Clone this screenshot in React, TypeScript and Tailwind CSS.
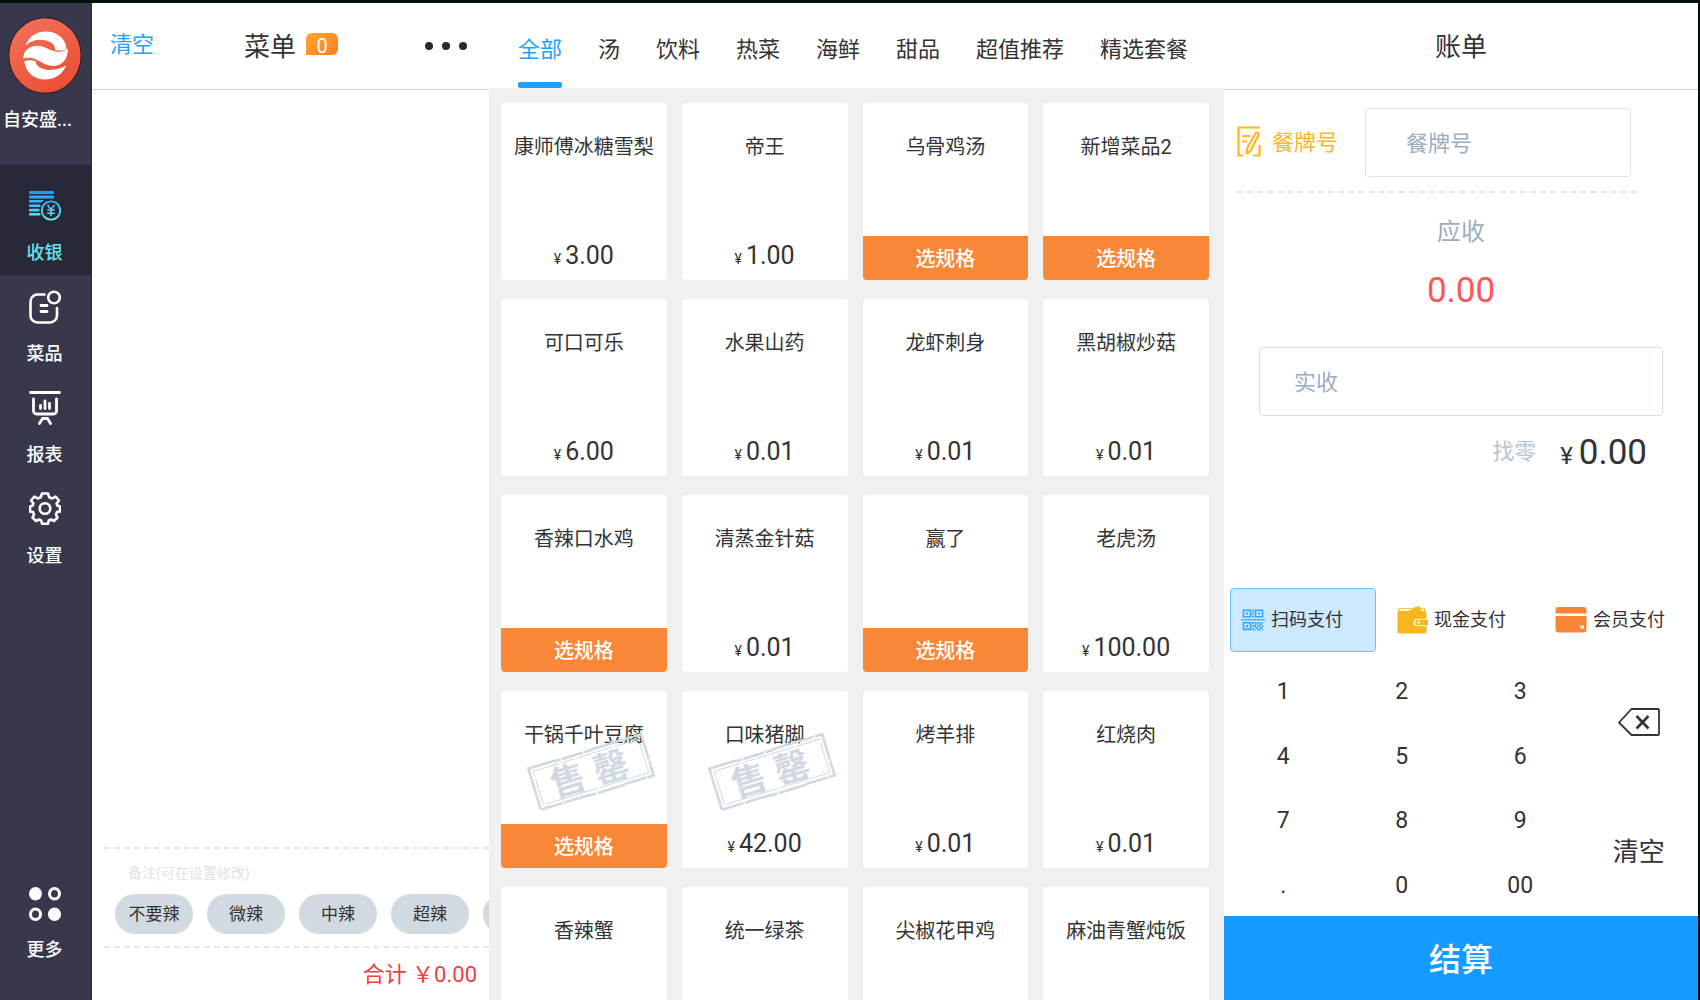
import React, { useState } from "react";

type Dish = { name: string; price?: string; hasOptions?: boolean; soldOut?: boolean };

const dishes: Dish[] = [
  { name: "康师傅冰糖雪梨", price: "3.00" },
  { name: "帝王", price: "1.00" },
  { name: "乌骨鸡汤", hasOptions: true },
  { name: "新增菜品2", hasOptions: true },
  { name: "可口可乐", price: "6.00" },
  { name: "水果山药", price: "0.01" },
  { name: "龙虾刺身", price: "0.01" },
  { name: "黑胡椒炒菇", price: "0.01" },
  { name: "香辣口水鸡", hasOptions: true },
  { name: "清蒸金针菇", price: "0.01" },
  { name: "赢了", hasOptions: true },
  { name: "老虎汤", price: "100.00" },
  { name: "干锅千叶豆腐", hasOptions: true, soldOut: true },
  { name: "口味猪脚", price: "42.00", soldOut: true },
  { name: "烤羊排", price: "0.01" },
  { name: "红烧肉", price: "0.01" },
  { name: "香辣蟹" },
  { name: "统一绿茶" },
  { name: "尖椒花甲鸡" },
  { name: "麻油青蟹炖饭" },
];

const categories = ["全部", "汤", "饮料", "热菜", "海鲜", "甜品", "超值推荐", "精选套餐"];
const remarks = ["不要辣", "微辣", "中辣", "超辣"];
const keys = ["1", "2", "3", "4", "5", "6", "7", "8", "9", ".", "0", "00"];

function Logo() {
  return (
    <svg viewBox="26 52 220 230" className="h-[77px] w-[74px]" aria-hidden="true">
      <defs>
        <linearGradient id="logo" x1="0.2" y1="0" x2="0.8" y2="1">
          <stop offset="0" stopColor="#f2705a" />
          <stop offset="1" stopColor="#e94c33" />
        </linearGradient>
      </defs>
      <ellipse cx="136" cy="167" rx="108" ry="113" fill="url(#logo)" stroke="#2a1c24" strokeWidth="3" />
      <g fill="#fff">
        <path d="M78 137C88 108 113 95 138 95c34 0 62 22 62 54-8 4-20 4-34 2 1-14-8-22-22-27-22-8-48-5-66 13Z" />
        <path d="M71 176c0-20 14-35 37-38 24-2 42 16 66 18 14 1 24-4 30-10 2 28-14 50-39 52-25 1-40-13-58-20-13-5-26-5-36-2Z" />
        <path d="M74 184c11-4 24-3 35 0-2 14 16 25 40 26 20 0 36-5 50-13-10 25-34 42-62 42-34 0-59-23-63-55Z" />
      </g>
    </svg>
  );
}

function CashierIcon() {
  return (
    <svg viewBox="0 0 32 30" className="h-[30px] w-8" fill="none" aria-hidden="true">
      <defs>
        <linearGradient id="cash" gradientUnits="userSpaceOnUse" x1="0" y1="0" x2="0" y2="30">
          <stop offset="0" stopColor="#1c97ff" />
          <stop offset="1" stopColor="#6cefee" />
        </linearGradient>
      </defs>
      <g fill="url(#cash)">
        <rect x="0" y="0" width="25" height="3" rx="0.8" />
        <rect x="0" y="4.6" width="25" height="2.8" rx="0.8" />
        <path d="M1 9h14l-2.500 2.600H1a1 1 0 0 1-1-1V10a1 1 0 0 1 1-1Z" />
        <rect x="0" y="13.400" width="11.500" height="2.600" rx="0.8" />
        <rect x="0" y="17.800" width="10.500" height="2.600" rx="0.8" />
        <rect x="0" y="22" width="11.500" height="2.600" rx="0.8" />
      </g>
      <g stroke="url(#cash)">
        <circle cx="22" cy="19.500" r="9.200" strokeWidth="1.800" />
        <path d="m18.500 14 3.500 4.500 3.500-4.500M22 18.500V25M18.300 19h7.400M18.300 22.200h7.400" strokeWidth="1.600" />
      </g>
    </svg>
  );
}

function DishIcon() {
  return (
    <svg viewBox="0 0 32 34" className="h-[34px] w-8" fill="none" stroke="#fff" strokeWidth="2.600" strokeLinecap="round" aria-hidden="true">
      <path d="M15.500 4.500H8.500a7 7 0 0 0-7 7V25.500a7 7 0 0 0 7 7h12.500a7 7 0 0 0 7-7V18" />
      <circle cx="25" cy="7.500" r="5.800" />
      <path d="M12 15.500h6M12 21.500h6" strokeWidth="2.800" />
    </svg>
  );
}

function ReportIcon() {
  return (
    <svg viewBox="0 0 32 34" className="h-[34px] w-8" fill="none" stroke="#fff" strokeWidth="2.800" strokeLinecap="round" strokeLinejoin="round" aria-hidden="true">
      <path d="M1.500 1.500h29M4.500 8v12a3 3 0 0 0 3 3h17a3 3 0 0 0 3-3V8" />
      <path d="M11.500 14.500V17.500M16 10v7.500M20.500 12.500v5" />
      <path d="m10.500 32.500 3-5h5l3 5" />
    </svg>
  );
}

function GearIcon() {
  return (
    <svg viewBox="-16 -16.500 32 33" className="h-[33px] w-8" fill="none" stroke="#fff" strokeWidth="2.600" strokeLinejoin="round" aria-hidden="true">
      <path d="M-3-15H3L4.200-11.300 7.300-10 10.600-12 14-8 11.600-5.200 12.200-3 15-2V3L12 3.500 11 6 12.500 9 9 12.500 6 11 3.800 12 3 15.200H-3L-3.800 12-6 11-9 12.500-12.500 9-11 6-12 3.500-15 3V-2L-12.200-3-11.600-5.200-14-8-10.600-12-7.300-10-4.200-11.300Z" />
      <circle r="5.300" />
    </svg>
  );
}

function MoreIcon() {
  return (
    <svg viewBox="0 0 32 34" className="h-[34px] w-8" aria-hidden="true">
      <ellipse cx="6.500" cy="6.800" rx="6.500" ry="6.800" fill="#fff" />
      <ellipse cx="25.500" cy="27.200" rx="6.500" ry="6.800" fill="#fff" />
      <g fill="none" stroke="#fff" strokeWidth="3">
        <ellipse cx="25.500" cy="6.800" rx="5" ry="5.300" />
        <ellipse cx="6.500" cy="27.200" rx="5" ry="5.300" />
      </g>
    </svg>
  );
}

function NoteIcon() {
  return (
    <svg viewBox="0 0 24 31" className="mb-0.5 h-[31px] w-6" fill="none" stroke="#ffb71b" strokeWidth="2.200" aria-hidden="true">
      <path d="M23 1.500H1.500V29.500h5M22.500 19v10.500H16M5 10h8.500M5 15.500h5" />
      <path d="M18.500 7.200a1.800 1.800 0 0 1 3 1.800L13.500 25l-3.800 2.500.3-5Z" strokeLinejoin="round" />
    </svg>
  );
}

function QrIcon() {
  return (
    <svg viewBox="0 0 24 22" className="h-[22px] w-6 shrink-0" fill="none" stroke="#2fa5fc" strokeWidth="1.600" aria-hidden="true">
      <path d="M2.500 1.200h7v6.600h-7ZM14.500 1.200h7v6.600h-7ZM2.500 13.800h7v6.600h-7Z" />
      <path d="M4.900 4.500h2.200M16.900 4.500h2.200M4.900 17.100h2.200" strokeWidth="2.200" />
      <path d="M0 10.800h24" strokeWidth="1.200" />
      <path d="M12 .5v9M12 13v8.500" strokeDasharray="2 1" />
      <path d="m13.500 13 8.500 8.500M17.500 13l4.500 4.500M13.500 17l4.500 4.500M22 13l-8.500 8.500M17.500 13l-4 4M22 17.500l-4 4" strokeDasharray="2.600 .9" strokeWidth="1.200" />
    </svg>
  );
}

function WalletIcon() {
  return (
    <svg viewBox="0 0 31 28" className="h-7 w-[31px] shrink-0" aria-hidden="true">
      <path d="M3 2h12L22 .3l2 1.700h3a1 1 0 0 1 1 1v3H1V4a2 2 0 0 1 2-2Z" fill="#f7b51f" />
      <path d="M3.500 2.800h13L11 5H3a1.100 1.100 0 0 1 .5-2.200ZM24.500 2.500l2.500.3v2.200h-3Z" fill="#fff" />
      <path d="M1 5.300h27a1.500 1.500 0 0 1 1.500 1.500V13H20a3.500 3.500 0 0 0 0 7h9.500v5a2.500 2.500 0 0 1-2.500 2.500H3A2.500 2.500 0 0 1 .5 25V5Z" fill="#f7b51f" />
      <path d="M21 13.700h10v5.600H21a2.800 2.800 0 0 1 0-5.600Z" fill="#f7b51f" />
      <path d="M30 13.300h-9.500a3.200 3.200 0 0 0 0 6.400H29" fill="none" stroke="#fff3d0" />
      <circle cx="21.500" cy="16.500" r="1.200" fill="#fff" />
    </svg>
  );
}

function CardIcon() {
  return (
    <svg viewBox="0 0 32 26" className="h-[26px] w-8 shrink-0" fill="#f78536" aria-hidden="true">
      <path d="M3.500 0h25A3 3 0 0 1 31.500 3v3.500H.5V3a3 3 0 0 1 3-3Z" />
      <path d="M.5 9h31v13.500a3 3 0 0 1-3 3h-25a3 3 0 0 1-3-3Z" />
      <rect x="25.500" y="18.500" width="3.500" height="3" fill="#fff" />
    </svg>
  );
}

function BackspaceIcon() {
  return (
    <svg viewBox="0 0 42 28" className="mb-0.5 h-7 w-[42px]" fill="none" stroke="#333" strokeWidth="1.800" strokeLinejoin="round" aria-hidden="true">
      <path d="M13.500 1H40a1 1 0 0 1 1 1v24a1 1 0 0 1-1 1H13.500L1 14.500Z" />
      <path d="m18.500 8 12 12.500M30.500 8l-12 12.500" strokeWidth="2.600" />
    </svg>
  );
}

function SoldOutStamp() {
  return (
    <div className="pointer-events-none absolute inset-x-0 top-[38px] flex justify-center">
      <svg viewBox="0 0 136 86" className="ml-3.5 h-[86px] w-[136px] shrink-0" role="img" aria-label="售罄">
        <g transform="rotate(-17 68 43)" fill="none" stroke="#d0d9e1">
          <path d="M9 21.500h27l1 .6h38l1-.6h51V64.500H97l-1 .6H60l-1-.6H9Z" strokeWidth="2.600" strokeDasharray="34 1.200 22 1 51 1.600" />
          <path d="M13 25.500h110V60.500H13Z" strokeWidth="1" strokeDasharray="27 2 14 1 39 2" />
          <text x="26" y="57" fontSize="35" fontWeight="700" fill="#d0d9e1" stroke="none">售</text>
          <text x="71" y="57" fontSize="35" fontWeight="700" fill="#d0d9e1" stroke="none">罄</text>
        </g>
      </svg>
    </div>
  );
}

function DishCard({ dish }: { dish: Dish }) {
  return (
    <article className="relative flex h-[177px] flex-col items-center justify-between overflow-hidden rounded bg-white text-[#333]">
      <h3 className="pt-[30px] text-xl leading-7">{dish.name}</h3>
      {dish.price && (
        <p className="pb-2 text-[25px] leading-8">
          <span className="mr-1 text-sm">¥</span>
          {dish.price}
        </p>
      )}
      {dish.hasOptions && (
        <button className="h-11 w-full bg-[#f88737] pt-0.5 text-xl font-medium text-white">选规格</button>
      )}
      {dish.soldOut && <SoldOutStamp />}
    </article>
  );
}

function Sidebar() {
  const items = [
    { label: "菜品", icon: <DishIcon /> },
    { label: "报表", icon: <ReportIcon /> },
    { label: "设置", icon: <GearIcon /> },
  ];
  return (
    <aside className="flex w-[92px] shrink-0 flex-col border-r border-[#29293a] bg-[#37384c] text-lg font-medium text-white">
      <div className="flex h-[162px] shrink-0 flex-col items-center pt-3.5 pr-0.5">
        <Logo />
        <p className="mt-3.5 w-full pl-[3px] leading-6">自安盛...</p>
      </div>
      <nav className="flex flex-1 flex-col">
        <button className="flex h-[110px] flex-col items-center justify-between bg-[#282938] pt-[26px] pr-0.5 pb-2 leading-7 text-[#68e3f0]">
          <CashierIcon />
          收银
        </button>
        {items.map((item) => (
          <button key={item.label} className="flex h-[101px] flex-col items-center justify-between pt-[15px] pr-0.5 pb-2 leading-7">
            {item.icon}
            {item.label}
          </button>
        ))}
        <button className="mt-auto flex flex-col items-center gap-[15px] pr-0.5 pb-9 leading-7">
          <MoreIcon />
          更多
        </button>
      </nav>
    </aside>
  );
}

function OrderPanel() {
  return (
    <section className="flex w-[397px] shrink-0 flex-col bg-white">
      <header className="flex h-[87px] shrink-0 items-center border-b border-[#cfcfcf] pr-[22px] pl-[18px]">
        <button className="w-[134px] pb-1 text-left text-[22px] text-[#1fa2ff]">清空</button>
        <h2 className="pt-0.5 text-[26px] text-[#333]">菜单</h2>
        <span className="mb-1 ml-2.5 flex h-[22px] w-8 items-end justify-center rounded-md rounded-bl-none bg-linear-to-br from-[#ffa62f] to-[#fd7f1f] text-xl leading-[18px] text-white">0</span>
        <button className="ml-auto flex gap-[9px] p-0" aria-label="更多操作">
          <i className="size-2 rounded-full bg-[#26273a]" />
          <i className="size-2 rounded-full bg-[#26273a]" />
          <i className="size-2 rounded-full bg-[#26273a]" />
        </button>
      </header>
      <div className="flex-1" />
      <footer className="ml-3 shrink-0">
        <div className="border-t-2 border-dashed border-[#e6e6e6] pt-3.5">
          <p className="pl-6 text-sm leading-5 text-[#dde2e8]">备注(可在设置修改)</p>
          <div className="mt-[11px] mb-3 ml-[11px] flex gap-3.5 overflow-hidden">
            {remarks.map((remark) => (
              <button key={remark} className="h-10 w-[78px] shrink-0 rounded-full bg-[#d1d9e1] pt-0.5 text-[17px] text-[#333]">
                {remark}
              </button>
            ))}
            <button aria-label="下一个备注" className="h-10 w-[78px] shrink-0 rounded-full bg-[#d1d9e1]" />
          </div>
        </div>
        <p className="border-t-2 border-dashed border-[#e6e6e6] pt-[11px] pr-3 pb-[9px] text-right text-[22px] leading-8 text-[#ef3f3f]">
          合计 ￥0.00
        </p>
      </footer>
    </section>
  );
}

function MenuPanel() {
  const [active, setActive] = useState("全部");
  return (
    <main className="flex min-w-0 flex-1 flex-col bg-[#f0f0f0]">
      <nav className="flex h-[85px] shrink-0 gap-9 bg-white pl-[29px] text-[22px] text-[#333]">
        {categories.map((category) => (
          <button
            key={category}
            onClick={() => setActive(category)}
            className={
              category === active
                ? "flex flex-col justify-between whitespace-nowrap pt-[29px] leading-9 text-[#1fa2ff]"
                : "flex flex-col justify-between whitespace-nowrap pt-[29px] leading-9"
            }
          >
            {category}
            {category === active && <span className="h-1.5 w-full rounded-xs bg-[#1fa2ff]" />}
          </button>
        ))}
      </nav>
      <div className="min-h-0 flex-1 overflow-hidden pt-[15px] pr-[15px] pl-3">
        <div className="grid grid-cols-4 gap-x-[15px] gap-y-[19px]">
          {dishes.map((dish) => (
            <DishCard key={dish.name} dish={dish} />
          ))}
        </div>
      </div>
    </main>
  );
}

function BillPanel() {
  const methods = [
    { label: "扫码支付", icon: <QrIcon /> },
    { label: "现金支付", icon: <WalletIcon /> },
    { label: "会员支付", icon: <CardIcon /> },
  ];
  const [method, setMethod] = useState("扫码支付");
  return (
    <section className="flex w-[474px] shrink-0 flex-col bg-white text-[#333]">
      <h2 className="flex h-[87px] shrink-0 items-center justify-center border-b border-[#cfcfcf] pt-0.5 text-[26px]">账单</h2>
      <div className="mr-[61px] ml-[13px] flex items-center border-b-2 border-dashed border-[#e6e6e6] pt-[18px] pr-1.5 pb-3.5">
        <label htmlFor="table-no" className="flex w-32 shrink-0 items-center gap-[11px] text-[22px] text-[#ffb71b]">
          <NoteIcon />
          餐牌号
        </label>
        <input id="table-no" placeholder="餐牌号" className="h-[69px] min-w-0 flex-1 rounded border border-[#dfe5ec] pt-0.5 pl-10 text-[22px] placeholder:text-[#9badbf]" />
      </div>
      <p className="mt-[21px] text-center text-2xl leading-9 text-[#9badbf]">应收</p>
      <p className="mt-[21px] text-center text-[35px] leading-10 text-[#ff5757]">0.00</p>
      <input aria-label="实收" placeholder="实收" className="mx-[35px] mt-9 h-[69px] rounded border border-[#d5dee8] pt-0.5 pl-[34px] text-[22px] placeholder:text-[#9badbf]" />
      <div className="mt-4 flex items-center justify-end pr-[51px] leading-10">
        <span className="mr-6 pb-0.5 text-[22px] text-[#b7c5d3]">找零</span>
        <p className="text-[35px]">
          <span className="mr-1.5 text-2xl">¥</span>
          0.00
        </p>
      </div>
      <div className="flex-1" />
      <div className="grid grid-cols-3">
        {methods.map((item) => (
          <button
            key={item.label}
            onClick={() => setMethod(item.label)}
            className={
              item.label === method
                ? "mx-1.5 flex h-16 items-center gap-1.5 rounded border border-[#6cc0fb] bg-[#cde9ff] pl-2.5 text-lg whitespace-nowrap"
                : "mx-1.5 flex h-16 items-center gap-1.5 rounded border border-transparent pl-2 text-lg whitespace-nowrap"
            }
          >
            {item.icon}
            {item.label}
          </button>
        ))}
      </div>
      <div className="mt-1.5 flex h-[258px] shrink-0 text-[23px]">
        <div className="grid flex-3 grid-cols-3 grid-rows-4">
          {keys.map((key) => (
            <button key={key} className="pt-1">{key}</button>
          ))}
        </div>
        <div className="grid flex-1 grid-rows-2">
          <button className="flex items-center justify-center" aria-label="退格">
            <BackspaceIcon />
          </button>
          <button className="pt-0.5 text-[26px]">清空</button>
        </div>
      </div>
      <button className="h-21 shrink-0 bg-[#159bff] pt-1 text-[32px] font-medium text-white">结算</button>
    </section>
  );
}

export default function App() {
  return (
    <div className="flex h-screen overflow-hidden border-t-3 border-r-2 border-[#03110d] bg-white font-[Roboto,'Noto_Sans_CJK_SC',sans-serif]">
      <Sidebar />
      <OrderPanel />
      <MenuPanel />
      <BillPanel />
    </div>
  );
}
